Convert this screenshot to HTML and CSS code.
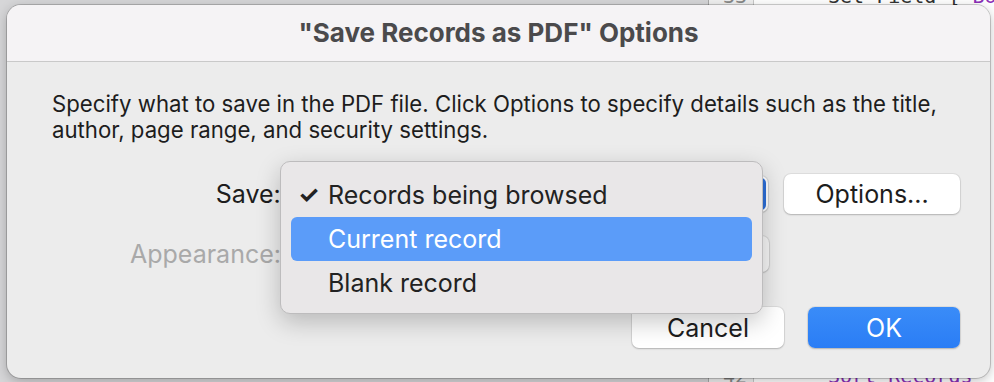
FILE: index.html
```html
<!DOCTYPE html>
<html lang="en">
<head>
    <meta charset="UTF-8">
    <title>Save Records as PDF Options</title>
    <link rel="stylesheet" href="styles.css">
</head>
<body>
    <div class="desk">
        <div class="side"></div>
        <div class="editor">
            <div class="gutter">
                <span class="ln top">33</span>
                <span class="ln bottom">42</span>
            </div>
            <div class="code">
                <div class="step top">Set Field [ <span class="kw">Bo</span></div>
                <div class="step bottom"><span class="kw">Sort Records</span></div>
            </div>
        </div>
    </div>

    <div class="dialog">
        <div class="titlebar">"Save Records as PDF" Options</div>
        <div class="content">
            <p class="desc">Specify what to save in the PDF file. Click Options to specify details such as the title, author, page range, and security settings.</p>

            <div class="row">
                <label class="lbl">Save:</label>
                <div class="popup"><span class="arrows"></span></div>
                <button class="btn">Options...</button>
            </div>
            <div class="row second">
                <label class="lbl off">Appearance:</label>
                <div class="popup off"></div>
            </div>

            <div class="footer">
                <button class="btn">Cancel</button>
                <button class="btn primary">OK</button>
            </div>
        </div>

        <div class="menu">
            <div class="item"><span class="check">&#10003;</span>Records being browsed</div>
            <div class="item active">Current record</div>
            <div class="item">Blank record</div>
        </div>
    </div>
</body>
</html>
```

FILE: styles.css
```css
body {
    margin: 0;
    width: 994px;
    height: 382px;
    overflow: hidden;
    font-family: Inter, "Noto Sans", sans-serif;
    position: relative;
}
.desk {
    display: flex;
    height: 382px;
}
.side {
    width: 708px;
    background: #d6d6d8;
    border-right: 1px solid #a9a9a9;
}
.editor {
    flex: 1;
    display: flex;
    background: #fff;
    font-family: "DejaVu Sans Mono", monospace;
    font-size: 20px;
    color: #333;
}
.gutter {
    width: 44px;
    background: #f0f0f0;
    border-right: 1px solid #c8c8c8;
    position: relative;
    color: #888;
}
.code {
    flex: 1;
    position: relative;
}
.top { position: absolute; top: -16px; }
.bottom { position: absolute; top: 364px; }
.ln { left: 14px; }
.step { left: 74px; white-space: nowrap; }
.kw { color: #8b2fb8; }

.dialog {
    position: absolute;
    left: 7px;
    top: 5px;
    width: 983px;
    height: 373px;
    border-radius: 14px;
    background: #ececec;
    box-shadow: 0 0 0 1px rgba(0,0,0,0.18), 0 3px 12px rgba(0,0,0,0.25);
    overflow: hidden;
}
.titlebar {
    height: 56px;
    line-height: 56px;
    text-align: center;
    font-weight: 700;
    font-size: 26px;
    color: #4b4a4c;
    background: #f5f3f5;
    border-bottom: 1px solid #c9c9c9;
}
.content {
    padding: 0 30px 0 45px;
}
.desc {
    margin: 29px 0 0;
    font-size: 22.2px;
    line-height: 26px;
    color: #1d1d1d;
}
.row {
    display: flex;
    align-items: center;
    margin-top: 31px;
    height: 40px;
}
.row.second {
    margin-top: 20px;
}
.lbl {
    width: 229px;
    text-align: right;
    font-size: 25px;
    color: #1d1d1d;
}
.lbl.off {
    color: #a9a9a9;
}
.popup {
    width: 486px;
    height: 36px;
    margin-left: 2px;
    background: #fff;
    border-radius: 7px;
    box-shadow: 0 0 0 1px rgba(0,0,0,0.08), 0 1px 2px rgba(0,0,0,0.15);
    position: relative;
}
.popup.off {
    background: #f6f6f6;
}
.arrows {
    position: absolute;
    right: 2px;
    top: 2px;
    width: 16px;
    height: 32px;
    border-radius: 5px;
    background: #2d6fd9;
}
.btn {
    font-family: inherit;
    font-size: 25px;
    color: #1d1d1d;
    background: #fff;
    border: none;
    border-radius: 7px;
    height: 40px;
    width: 176px;
    box-shadow: 0 0 0 1px rgba(0,0,0,0.06), 0 1px 2px rgba(0,0,0,0.2);
}
.row .btn {
    margin-left: 16px;
}
.footer {
    display: flex;
    justify-content: flex-end;
    gap: 24px;
    margin-top: 33px;
}
.footer .btn {
    width: 152px;
    height: 41px;
}
.btn.primary {
    color: #fff;
    background: linear-gradient(#3a8cf8, #2a7df5);
}

.menu {
    position: absolute;
    left: 273px;
    top: 156px;
    width: 483px;
    height: 153px;
    box-sizing: border-box;
    padding: 11px 10px;
    background: #e9e7e8;
    border-radius: 10px;
    border: 1px solid #bdbcbd;
    box-shadow: 0 8px 24px rgba(0,0,0,0.22);
}
.item {
    height: 44px;
    line-height: 44px;
    padding-left: 37px;
    border-radius: 6px;
    font-size: 25px;
    color: #222;
    position: relative;
}
.item.active {
    background: #5b9cf9;
    color: #fff;
}
.check {
    position: absolute;
    left: 7px;
    font-size: 24px;
    font-weight: 700;
}
```
